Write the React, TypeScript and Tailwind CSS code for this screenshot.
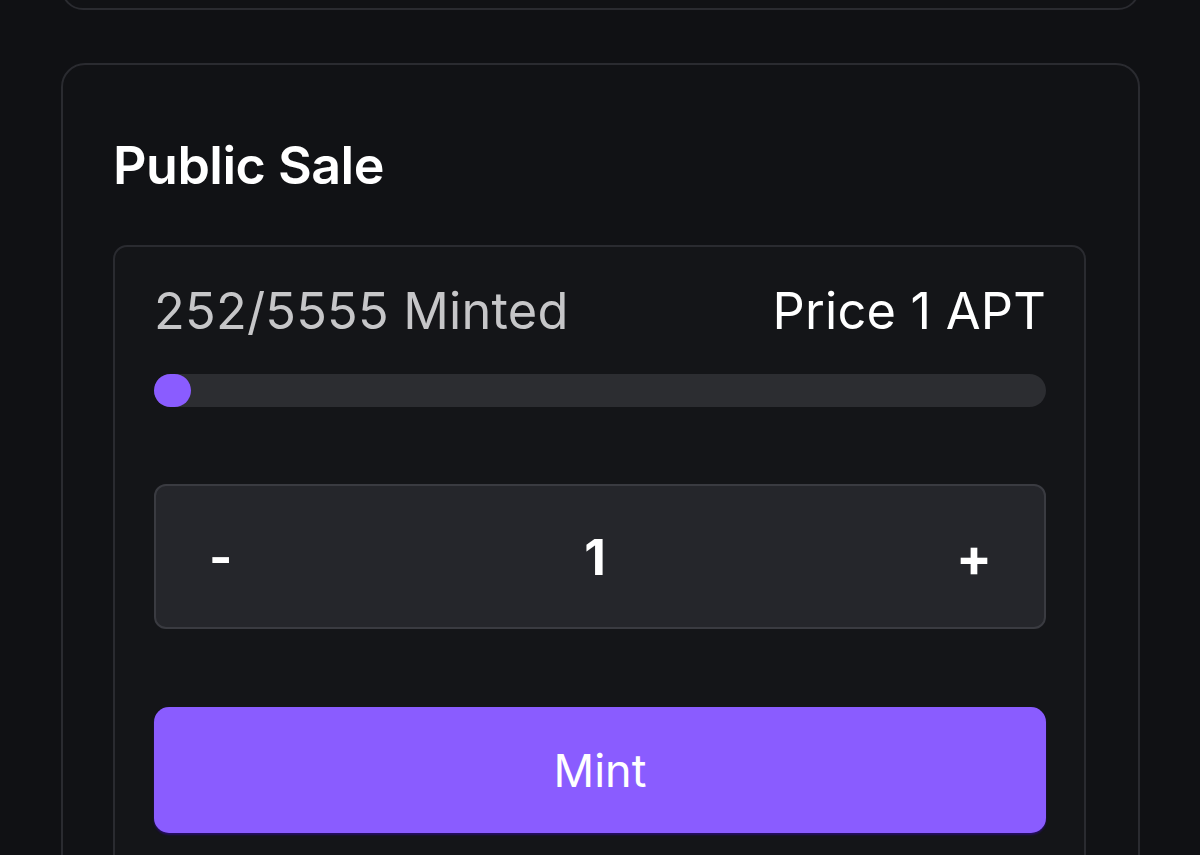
import React from "react";

export default function App() {
  return (
    <div
      className="w-[1200px] h-[855px] overflow-hidden bg-[#101114] pl-[61px] pr-[60px]"
      style={{ fontFamily: "Inter, 'Noto Sans', sans-serif" }}
    >
      <div className="mt-[-190px] h-[200px] rounded-[22px] border-2 border-[#2a2b30] bg-[#111215]" />
      <div className="mt-[53px] rounded-[24px] border-2 border-[#2a2b30] bg-[#111215] pl-[50px] pr-[52px] pt-[75px] pb-[60px]">
        <h2 className="text-[52px] leading-[52px] font-semibold text-white tracking-[-0.5px]">Public Sale</h2>
        <div className="mt-[53px] rounded-[14px] border-2 border-[#2a2b30] bg-[#141518] pl-[39px] pr-[38px] pt-[39px] pb-[60px]">
          <div className="flex items-center justify-between text-[50.5px] leading-[50px] tracking-[0.2px]">
            <span className="text-[#c6c6c8]">252/5555 Minted</span>
            <span className="text-white">Price 1 APT</span>
          </div>
          <div className="mt-[38px] h-[33px] rounded-full bg-[#2c2d31]">
            <div className="h-[33px] w-[37px] rounded-full bg-[#8a5cff]" />
          </div>
          <div className="mt-[77px] h-[145px] rounded-[12px] border-2 border-[#3a3b41] bg-[#25262b] px-[52px] grid grid-cols-3 items-center text-[50px] leading-[50px] font-bold text-white">
            <span className="text-left pl-[1px]">-</span>
            <span className="text-center pr-[10px]">1</span>
            <span className="text-right text-[53px]">+</span>
          </div>
          <button className="mt-[78px] flex h-[126px] w-full items-center justify-center rounded-[15px] bg-[#8a5cff] text-[45px] leading-[45px] text-white shadow-[0_2px_2px_rgba(40,12,110,0.9)]">
            Mint
          </button>
        </div>
      </div>
    </div>
  );
}
